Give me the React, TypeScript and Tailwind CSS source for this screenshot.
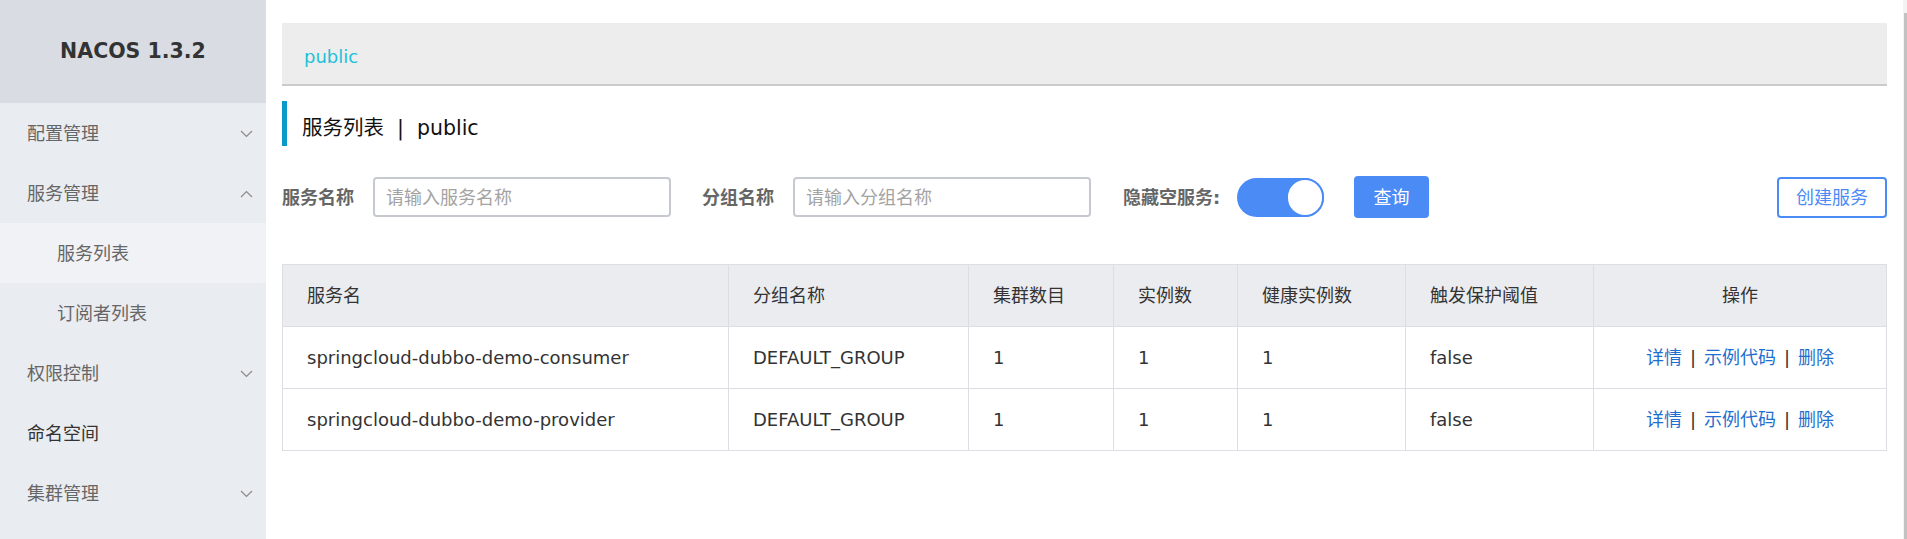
import React from "react";

function Chevron({ up }: { up?: boolean }) {
  return (
    <svg width="13" height="8" viewBox="0 0 13 8" className="shrink-0">
      <polyline
        points={up ? "1,7 6.5,1.5 12,7" : "1,1 6.5,6.5 12,1"}
        fill="none"
        stroke="#8a8a8a"
        strokeWidth="1.2"
      />
    </svg>
  );
}

function MenuItem({ label, chevron, dark }: { label: string; chevron?: "up" | "down"; dark?: boolean }) {
  return (
    <div className="h-[60px] flex items-center justify-between pl-[27px] pr-[13px] pt-[1px]">
      <span className={dark ? "text-[#333]" : "text-[#666]"}>{label}</span>
      {chevron ? <Chevron up={chevron === "up"} /> : null}
    </div>
  );
}

function SubItem({ label, active }: { label: string; active?: boolean }) {
  return (
    <div className={"h-[60px] flex items-center pl-[57px] pt-[1px] text-[#666] " + (active ? "bg-[#f1f2f5]" : "")}>
      {label}
    </div>
  );
}

const rows = [
  "springcloud-dubbo-demo-consumer",
  "springcloud-dubbo-demo-provider",
];

export default function App() {
  return (
    <div className="flex w-[1907px] h-[539px] overflow-hidden bg-white font-['DejaVu_Sans','Noto_Sans_CJK_SC',sans-serif] text-[18px]">
      {/* Sidebar */}
      <aside className="w-[266px] shrink-0 bg-[#e9ecf0] flex flex-col">
        <div className="h-[103px] bg-[#d9dde3] flex items-center justify-center text-[20.5px] font-bold text-[#333]">
          NACOS 1.3.2
        </div>
        <MenuItem label="配置管理" chevron="down" />
        <MenuItem label="服务管理" chevron="up" />
        <SubItem label="服务列表" active />
        <SubItem label="订阅者列表" />
        <MenuItem label="权限控制" chevron="down" />
        <MenuItem label="命名空间" dark />
        <MenuItem label="集群管理" chevron="down" />
      </aside>

      {/* Main */}
      <main className="flex-1 px-4 flex flex-col">
        <div className="mt-[23px] h-[63px] bg-[#ededed] border-b-2 border-[#cbcbcb] pl-[22px] pt-[22px]">
          <span className="text-[#1fc1d9] leading-[24px] block">public</span>
        </div>

        <div className="mt-[15px] h-[45px] border-l-[5px] border-[#0b98cb] flex items-center pl-[15px] pt-[10px] text-[20.5px] text-[#111]">
          <span>服务列表</span>
          <span className="mx-[13px]">|</span>
          <span>public</span>
        </div>

        <div className="mt-[30px] h-[42px] flex items-center">
          <span className="font-bold text-[#666] w-[72px]">服务名称</span>
          <div className="ml-[19px] w-[298px] h-[40px] border-2 border-[#c7c9d1] rounded-[4px] flex items-center pl-[11px] text-[18px] text-[#a3a3a3]">
            请输入服务名称
          </div>
          <span className="ml-[31px] font-bold text-[#666] w-[72px]">分组名称</span>
          <div className="ml-[19px] w-[298px] h-[40px] border-2 border-[#c7c9d1] rounded-[4px] flex items-center pl-[11px] text-[18px] text-[#a3a3a3]">
            请输入分组名称
          </div>
          <span className="ml-[32px] font-bold text-[#666] w-[96px] whitespace-nowrap">隐藏空服务:</span>
          <div className="ml-[18px] w-[87px] h-[39px] rounded-full bg-[#4b8bf6] flex items-center justify-end">
            <div className="w-[38px] h-[39px] rounded-full bg-white border-2 border-[#4b8bf6]" />
          </div>
          <div className="ml-[30px] w-[75px] h-[42px] rounded-[4px] bg-[#4b8bf6] text-white flex items-center justify-center text-[18px]">
            查询
          </div>
          <div className="ml-auto w-[110px] h-[41px] rounded-[4px] border-2 border-[#4b8bf6] text-[#4b8bf6] flex items-center justify-center text-[18px]">
            创建服务
          </div>
        </div>

        <table className="mt-[46px] w-[1604px] table-fixed border-collapse text-[#333]">
          <colgroup>
            <col className="w-[446px]" />
            <col className="w-[240px]" />
            <col className="w-[145px]" />
            <col className="w-[124px]" />
            <col className="w-[168px]" />
            <col className="w-[188px]" />
            <col className="w-[293px]" />
          </colgroup>
          <thead>
            <tr className="h-[62px] bg-[#ebecf0]">
              <th className="border border-[#dcdee3] pl-6 text-left font-normal">服务名</th>
              <th className="border border-[#dcdee3] pl-6 text-left font-normal">分组名称</th>
              <th className="border border-[#dcdee3] pl-6 text-left font-normal">集群数目</th>
              <th className="border border-[#dcdee3] pl-6 text-left font-normal">实例数</th>
              <th className="border border-[#dcdee3] pl-6 text-left font-normal">健康实例数</th>
              <th className="border border-[#dcdee3] pl-6 text-left font-normal">触发保护阈值</th>
              <th className="border border-[#dcdee3] text-center font-normal">操作</th>
            </tr>
          </thead>
          <tbody>
            {rows.map((name) => (
              <tr key={name} className="h-[62px]">
                <td className="border border-[#dcdee3] pl-6 whitespace-nowrap">{name}</td>
                <td className="border border-[#dcdee3] pl-6">DEFAULT_GROUP</td>
                <td className="border border-[#dcdee3] pl-6">1</td>
                <td className="border border-[#dcdee3] pl-6">1</td>
                <td className="border border-[#dcdee3] pl-6">1</td>
                <td className="border border-[#dcdee3] pl-6">false</td>
                <td className="border border-[#dcdee3] text-center">
                  <span className="text-[#1f6fcf]">详情</span>
                  <span className="mx-[8px]">|</span>
                  <span className="text-[#1f6fcf]">示例代码</span>
                  <span className="mx-[8px]">|</span>
                  <span className="text-[#1f6fcf]">删除</span>
                </td>
              </tr>
            ))}
          </tbody>
        </table>
      </main>

      {/* Scrollbar */}
      <div className="w-[5px] shrink-0 bg-[#f3f3f3] flex flex-col pt-[13px]">
        <div className="ml-[1px] w-[3px] flex-1 bg-[#c2c2c2]" />
      </div>
    </div>
  );
}
